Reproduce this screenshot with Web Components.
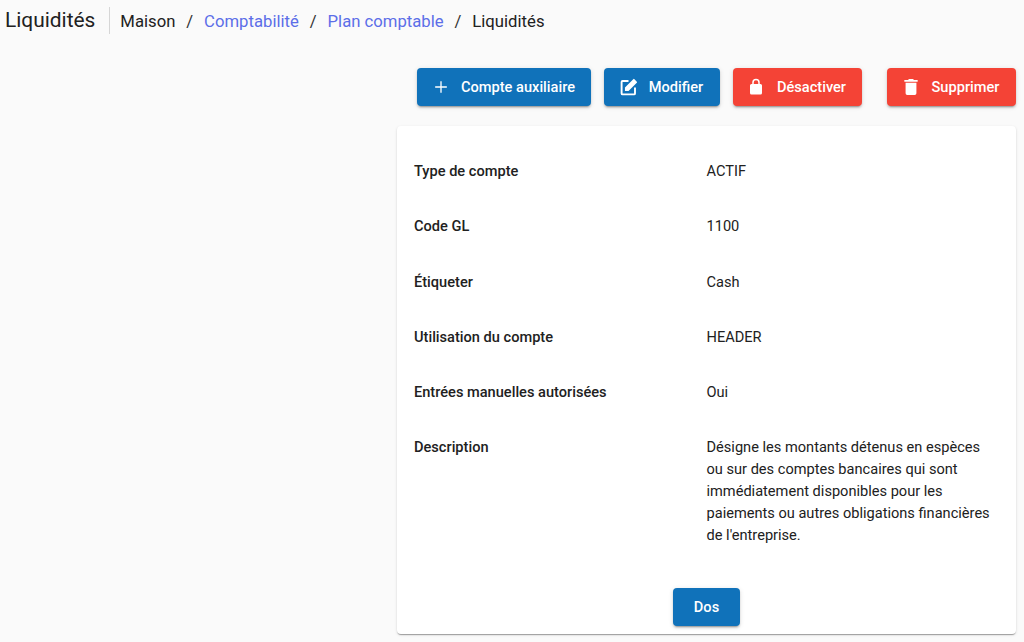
<!DOCTYPE html>
<html lang="fr">
<head>
<meta charset="utf-8">
<title>Liquidités</title>
<style>
  html, body { margin: 0; height: 642px; overflow: hidden; }
  body { background: #fafafa; font-family: Roboto, "Liberation Sans", sans-serif; color: #212121; }
</style>
</head>
<body>
<page-shell>
  <page-header slot="header" heading="Liquidités">
    <crumb-item>Maison</crumb-item>
    <crumb-item href="#">Comptabilité</crumb-item>
    <crumb-item href="#">Plan comptable</crumb-item>
    <crumb-item last>Liquidités</crumb-item>
  </page-header>
  <action-bar slot="actions">
    <app-button icon="plus" style="width:174px">Compte auxiliaire</app-button>
    <app-button icon="edit" style="width:116px">Modifier</app-button>
    <app-button icon="lock" color="warn" style="width:129px">Désactiver</app-button>
    <app-button icon="trash" color="warn" style="width:129px;margin-left:12px">Supprimer</app-button>
  </action-bar>
  <detail-card>
    <detail-row label="Type de compte">ACTIF</detail-row>
    <detail-row label="Code GL">1100</detail-row>
    <detail-row label="Étiqueter">Cash</detail-row>
    <detail-row label="Utilisation du compte">HEADER</detail-row>
    <detail-row label="Entrées manuelles autorisées">Oui</detail-row>
    <detail-row label="Description">Désigne les montants détenus en espèces ou sur des comptes bancaires qui sont immédiatement disponibles pour les paiements ou autres obligations financières de l'entreprise.</detail-row>
    <app-button slot="footer" style="width:67px">Dos</app-button>
  </detail-card>
</page-shell>

<script>
// each icon: rendered size in px, then its 24-unit path
const ICONS = {
  plus: [20, '<path d="M19 12.8h-6.2V19h-1.6v-6.2H5v-1.6h6.2V5h1.6v6.2H19z"/>'],
  edit: [19, '<path d="M19 19.5H4.5V5H12V2.6H4.5A2.4 2.4 0 0 0 2.1 5v14.5a2.4 2.4 0 0 0 2.4 2.4H19a2.4 2.4 0 0 0 2.4-2.4V12H19z"/><path d="M18 1.5 7.5 12v4.5H12L22.5 6a1 1 0 0 0 0-1.4l-3-3.1a1 1 0 0 0-1.5 0z"/>'],
  lock: [18, '<path d="M18 8h-1V6A5 5 0 0 0 7 6v2H6a2 2 0 0 0-2 2v10a2 2 0 0 0 2 2h12a2 2 0 0 0 2-2V10a2 2 0 0 0-2-2zM9 6a3 3 0 0 1 6 0v2H9z"/>'],
  trash: [20, '<path d="M5.5 19.5a2 2 0 0 0 2 2h9a2 2 0 0 0 2-2V7h-13zM20 3.5h-4.5l-1-1h-5l-1 1H4v2.2h16z"/>']
};

class PageShell extends HTMLElement {
  constructor() {
    super();
    this.attachShadow({ mode: 'open' }).innerHTML = `
      <style>
        :host { display: block; }
        .content { display: flex; flex-direction: column; align-items: flex-end; padding: 0 8px 0 0; }
      </style>
      <slot name="header"></slot>
      <div class="content">
        <slot name="actions"></slot>
        <slot></slot>
      </div>`;
  }
}

class PageHeader extends HTMLElement {
  constructor() {
    super();
    this.attachShadow({ mode: 'open' }).innerHTML = `
      <style>
        :host { display: flex; align-items: center; height: 41px; padding: 0 0 0 5px; }
        h1 { margin: 0; font: 400 20.9px/27px Roboto, sans-serif; color: #212121; padding-right: 13.5px; border-right: 1px solid #d6d6d6; }
        nav { display: flex; align-items: center; padding: 2px 0 0 10.5px; }
      </style>
      <h1></h1>
      <nav><slot></slot></nav>`;
    this.shadowRoot.querySelector('h1').textContent = this.getAttribute('heading');
  }
}

class CrumbItem extends HTMLElement {
  constructor() {
    super();
    const link = this.hasAttribute('href');
    const last = this.hasAttribute('last');
    this.attachShadow({ mode: 'open' }).innerHTML = `
      <style>
        :host { display: inline-flex; font: 400 16.7px/22px Roboto, sans-serif; color: #212121; }
        a { color: #5c6ee8; text-decoration: none; }
        .sep { padding: 0 10.9px; color: #333; }
      </style>
      ${link ? '<a href="#"><slot></slot></a>' : '<span><slot></slot></span>'}
      ${last ? '' : '<span class="sep">/</span>'}`;
  }
}

class ActionBar extends HTMLElement {
  constructor() {
    super();
    this.attachShadow({ mode: 'open' }).innerHTML = `
      <style>
        :host { display: flex; gap: 13px; padding-top: 27px; margin-bottom: 20px; }
      </style>
      <slot></slot>`;
  }
}

class AppButton extends HTMLElement {
  constructor() {
    super();
    const icon = ICONS[this.getAttribute('icon')];
    const warn = this.getAttribute('color') === 'warn';
    this.attachShadow({ mode: 'open' }).innerHTML = `
      <style>
        :host { display: block; height: 38px; }
        button {
          box-sizing: border-box; width: 100%; height: 100%; border: 0; border-radius: 4px;
          display: flex; align-items: center; justify-content: center; gap: 9.5px;
          background: ${warn ? '#f44336' : '#1072ba'}; color: #fff;
          font: 500 14.6px/20px Roboto, sans-serif; padding: 0 ${icon ? '3.5px 0 0' : '0'};
          box-shadow: 0 3px 1px -2px rgba(0,0,0,.2), 0 2px 2px 0 rgba(0,0,0,.14), 0 1px 5px 0 rgba(0,0,0,.12);
        }
        .ic { width: 22px; height: 22px; flex: none; display: flex; align-items: center; justify-content: center; }
        svg { fill: #fff; }
      </style>
      <button>${icon ? `<span class="ic"><svg width="${icon[0]}" height="${icon[0]}" viewBox="0 0 24 24">${icon[1]}</svg></span>` : ''}<slot></slot></button>`;
  }
}

class DetailCard extends HTMLElement {
  constructor() {
    super();
    this.attachShadow({ mode: 'open' }).innerHTML = `
      <style>
        :host {
          display: block; box-sizing: border-box; width: 619px; height: 508px;
          background: #fff; border-radius: 4px; padding: 34px 17px 0;
          box-shadow: 0 2px 1px -1px rgba(0,0,0,.2), 0 1px 1px 0 rgba(0,0,0,.14), 0 1px 3px 0 rgba(0,0,0,.12);
        }
        .rows { display: flex; flex-direction: column; gap: 33.3px; }
        .footer { display: flex; justify-content: center; margin-top: 42px; }
      </style>
      <div class="rows"><slot></slot></div>
      <div class="footer"><slot name="footer"></slot></div>`;
  }
}

class DetailRow extends HTMLElement {
  constructor() {
    super();
    this.attachShadow({ mode: 'open' }).innerHTML = `
      <style>
        :host { display: grid; grid-template-columns: 292.5px 292px; font: 400 14.6px/22px Roboto, sans-serif; color: #212121; }
        .label { font-weight: 500; }
      </style>
      <div class="label"></div>
      <div class="value"><slot></slot></div>`;
    this.shadowRoot.querySelector('.label').textContent = this.getAttribute('label');
  }
}

customElements.define('page-shell', PageShell);
customElements.define('page-header', PageHeader);
customElements.define('crumb-item', CrumbItem);
customElements.define('action-bar', ActionBar);
customElements.define('app-button', AppButton);
customElements.define('detail-card', DetailCard);
customElements.define('detail-row', DetailRow);
</script>
</body>
</html>
